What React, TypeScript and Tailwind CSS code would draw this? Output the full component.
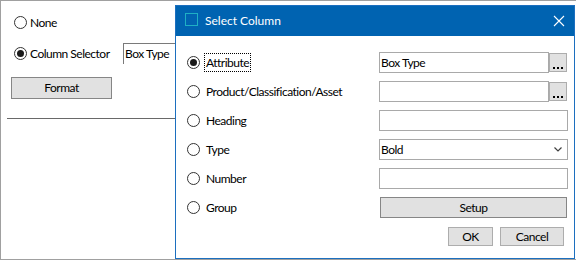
import React from "react";

const FONT = { fontFamily: "Lato, 'Noto Sans', sans-serif" };

function Radio({ checked }: { checked?: boolean }) {
  return (
    <span className="flex h-[13px] w-[13px] shrink-0 items-center justify-center rounded-full border border-[#333333] bg-white">
      {checked && <span className="h-[7px] w-[7px] rounded-full bg-[#1a1a1a]" />}
    </span>
  );
}

function Dots() {
  return (
    <button className="flex h-[19px] w-[18px] shrink-0 items-end justify-center border border-[#adadad] bg-[#e1e1e1] pb-[2px] text-[12px] font-bold leading-none text-black">
      <span className="flex gap-[2px]">
        <span className="h-[2px] w-[2px] bg-black" />
        <span className="h-[2px] w-[2px] bg-black" />
        <span className="h-[2px] w-[2px] bg-black" />
      </span>
    </button>
  );
}

function TextBox({ value, w }: { value?: string; w: string }) {
  return (
    <div className={`flex h-[21px] items-center border border-[#a9a9a9] bg-white pl-[1px] text-[12px] text-black ${w}`}>
      {value}
    </div>
  );
}

function Row({
  label,
  checked,
  focus,
  children,
}: {
  label: string;
  checked?: boolean;
  focus?: boolean;
  children: React.ReactNode;
}) {
  return (
    <div className="flex h-[21px] items-center">
      <div className="flex flex-1 items-center gap-[4px]">
        <Radio checked={checked} />
        <span
          className={`px-[1px] py-[1px] text-[12px] leading-[15px] text-black ${
            focus ? "border border-dotted border-black" : "border border-transparent"
          }`}
        >
          {label}
        </span>
      </div>
      <div className="flex w-[189px] items-center">{children}</div>
    </div>
  );
}

export default function App() {
  return (
    <div
      className="relative h-[260px] w-[576px] overflow-hidden border-b border-l border-t border-[#a0a0a0] bg-white tracking-[-0.5px]"
      style={FONT}
    >
      {/* Underlying window */}
      <div className="flex flex-col items-start pl-[6px] pt-[15px]">
        <div className="ml-[7px] flex h-[13px] items-center gap-[3px]">
          <Radio />
          <span className="text-[12px] text-black">None</span>
        </div>
        <div className="ml-[7px] mt-[14px] flex h-[21px] items-center">
          <div className="flex w-[109px] items-center gap-[3px]">
            <Radio checked />
            <span className="text-[12px] text-black">Column Selector</span>
          </div>
          <div className="flex h-[21px] w-[120px] items-center border-l border-t border-[#7a7a7a] pl-[1px] text-[12px] text-black">
            Box Type
          </div>
        </div>
        <button className="ml-[4px] mt-[13px] flex h-[22px] w-[101px] items-center justify-center border border-[#868686] bg-[#e1e1e1] text-[12px] text-black">
          Format
        </button>
        <div className="mt-[19px] h-px w-[200px] bg-[#696969]" />
      </div>

      {/* Dialog */}
      <div className="absolute left-[174px] top-[4px] flex h-[254px] w-[400px] flex-col border border-[#1c6fbf] bg-white">
        <div className="flex h-[30px] shrink-0 items-center bg-[#0063b1] pl-[9px] pr-[9px]">
          <span className="mb-[3px] h-[13px] w-[13px] border-[1.5px] border-[#1fb0c4]" />
          <span className="ml-[7px] text-[12px] tracking-normal text-white">Select Column</span>
          <svg className="ml-auto" width="12" height="12" viewBox="0 0 12 12">
            <path d="M1 1 L11 11 M11 1 L1 11" stroke="white" strokeWidth="1.1" fill="none" />
          </svg>
        </div>
        <div className="flex flex-1 flex-col pl-[11px] pr-[6px] pt-[16px]">
          <div className="flex flex-col gap-[8px]">
            <Row label="Attribute" checked focus>
              <TextBox value="Box Type" w="w-[170px]" />
              <Dots />
            </Row>
            <Row label="Product/Classification/Asset">
              <TextBox w="w-[170px]" />
              <Dots />
            </Row>
            <Row label="Heading">
              <TextBox w="w-[189px]" />
            </Row>
            <Row label="Type">
              <div className="flex h-[21px] w-[189px] items-center justify-between border border-[#a9a9a9] bg-white pl-[1px] pr-[5px] text-[12px] text-black">
                <span>Bold</span>
                <svg width="8" height="5" viewBox="0 0 8 5">
                  <path d="M0.5 0.5 L4 4 L7.5 0.5" stroke="#404040" strokeWidth="1.2" fill="none" />
                </svg>
              </div>
            </Row>
            <Row label="Number">
              <TextBox w="w-[189px]" />
            </Row>
            <Row label="Group">
              <button className="ml-[1px] flex h-[21px] w-[187px] items-center justify-center border border-[#868686] bg-[#e1e1e1] text-[12px] text-black">
                Setup
              </button>
            </Row>
          </div>
          <div className="mt-[9px] flex justify-end gap-[7px] pr-[4px]">
            <button className="flex h-[19px] w-[45px] items-center justify-center border border-[#adadad] bg-[#e1e1e1] text-[12px] text-black">
              OK
            </button>
            <button className="flex h-[19px] w-[64px] items-center justify-center border border-[#adadad] bg-[#e1e1e1] text-[12px] text-black">
              Cancel
            </button>
          </div>
        </div>
      </div>
    </div>
  );
}
